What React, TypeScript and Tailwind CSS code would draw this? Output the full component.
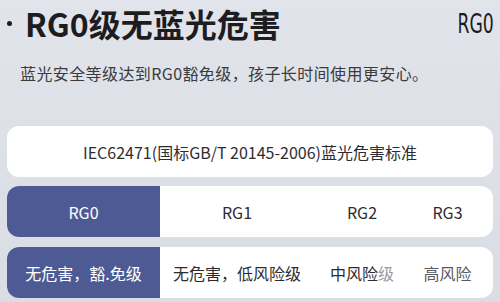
export default function App() {
  const font = { fontFamily: '"Noto Sans CJK SC", "Noto Sans", sans-serif' };
  return (
    <div className="w-[500px] h-[302px] overflow-hidden bg-gradient-to-b from-[#e1e4ea] to-[#d9dde4] px-[7px] pt-[3px]" style={font}>
      <div className="flex items-center justify-between h-[40px]">
        <div className="flex items-center">
          <span className="w-[5px] h-[5px] rounded-full bg-[#1d1d1f] ml-[0px] mr-[13px]" />
          <h1 className="text-[32px] leading-none font-bold text-[#1d1d1f] tracking-[0px]">RG0级无蓝光危害</h1>
        </div>
        <span className="inline-block text-[27px] leading-none text-[#1d1d1f] scale-x-[0.64] origin-right mr-[-1px] mt-[1px]" style={{ fontFamily: '"DejaVu Sans", sans-serif' }}>RG0</span>
      </div>

      <p className="mt-[22px] ml-[13px] text-[16px] leading-none text-[#3b3b3d] tracking-[0.4px]">
        蓝光安全等级达到RG0豁免级，孩子长时间使用更安心。
      </p>

      <div className="mt-[45px] h-[51px] rounded-[12px] bg-white flex items-center justify-center text-[16px] text-[#2d2d2f]">
        IEC62471(国标GB/T 20145-2006)蓝光危害标准
      </div>

      <div className="mt-[9px] flex flex-col gap-[10px]">
        <div className="h-[51px] rounded-[12px] overflow-hidden bg-white flex items-center text-[16px] text-[#2d2d2f]">
          <div className="w-[153px] h-full bg-[#4e5a94] text-white flex items-center justify-center">RG0</div>
          <div className="w-[154px] text-center">RG1</div>
          <div className="w-[96px] text-center">RG2</div>
          <div className="flex-1 text-center pr-[8px]">RG3</div>
        </div>
        <div className="h-[51px] rounded-[12px] overflow-hidden bg-white flex items-center text-[16px] text-[#2d2d2f]">
          <div className="w-[153px] h-full bg-[#4e5a94] text-white flex items-center justify-center">无危害，豁.免级</div>
          <div className="w-[154px] text-center">无危害，低风险级</div>
          <div className="w-[96px] text-center">中风险<span className="text-[#9a9a9e]">级</span></div>
          <div className="flex-1 text-center pr-[8px] text-[#5a5a5e]">高风险</div>
        </div>
      </div>
    </div>
  );
}
